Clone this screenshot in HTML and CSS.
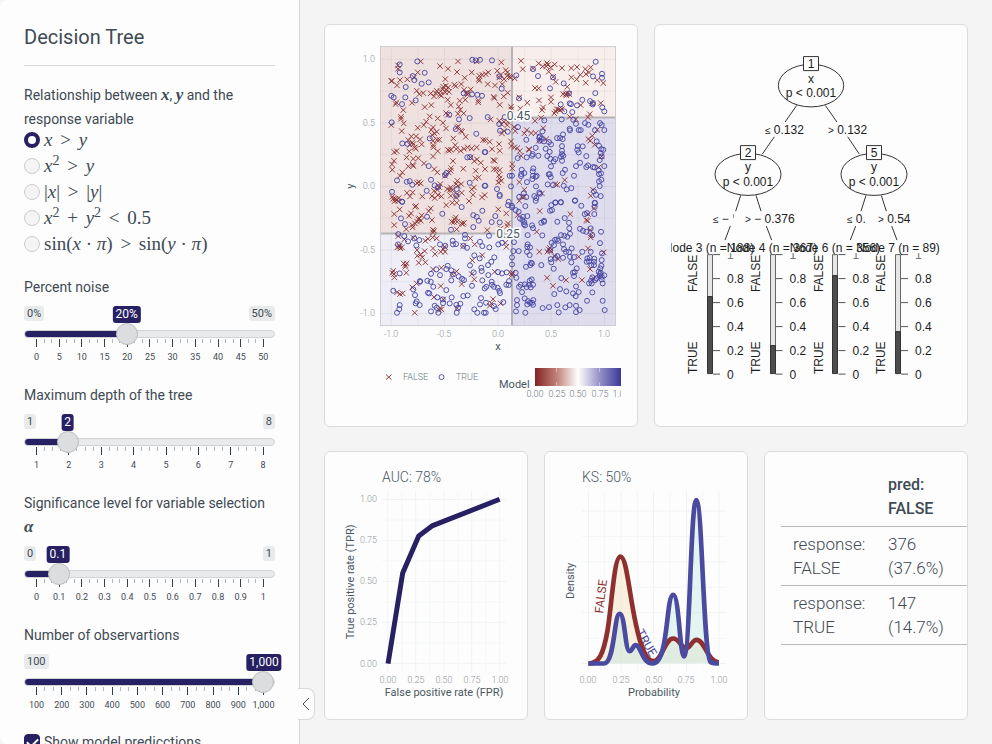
FILE: index.html
```html
<!DOCTYPE html>
<html lang="en">
<head>
<meta charset="utf-8">
<title>Decision Tree</title>
<link rel="stylesheet" href="styles.css">
</head>
<body>
<div class="layout">
  <aside class="sidebar">
    <form class="controls">
      <h1 class="title">Decision Tree</h1>
      <fieldset class="choices">
        <legend class="label">Relationship between <b class="math">x</b>, <b class="math">y</b> and the response variable</legend>
        <label class="choice"><input type="radio" name="rel" checked><span class="formula"><i>x</i> <span class="op">&gt;</span> <i>y</i></span></label>
        <label class="choice"><input type="radio" name="rel"><span class="formula"><i>x</i><sup>2</sup> <span class="op">&gt;</span> <i>y</i></span></label>
        <label class="choice"><input type="radio" name="rel"><span class="formula">|<i>x</i>| <span class="op">&gt;</span> |<i>y</i>|</span></label>
        <label class="choice"><input type="radio" name="rel"><span class="formula"><i>x</i><sup>2</sup> <span class="op">+</span> <i>y</i><sup>2</sup> <span class="op">&lt;</span> 0.5</span></label>
        <label class="choice"><input type="radio" name="rel"><span class="formula">sin(<i>x</i> · <i>π</i>) <span class="op">&gt;</span> sin(<i>y</i> · <i>π</i>)</span></label>
      </fieldset>
      <div class="field">
        <label class="label" for="noise">Percent noise</label>
        <div class="slider" style="--p:0.4">
          <div class="badges"><span class="limit">0%</span><output class="current" for="noise">20%</output><span class="limit">50%</span></div>
          <input id="noise" type="range" min="0" max="50" value="20">
          <div class="ticks" data-sub="3" data-labels="0 5 10 15 20 25 30 35 40 45 50"></div>
        </div>
      </div>
      <div class="field">
        <label class="label" for="depth">Maximum depth of the tree</label>
        <div class="slider" style="--p:0.143">
          <div class="badges"><span class="limit">1</span><output class="current" for="depth">2</output><span class="limit">8</span></div>
          <input id="depth" type="range" min="1" max="8" value="2">
          <div class="ticks" data-sub="4" data-labels="1 2 3 4 5 6 7 8"></div>
        </div>
      </div>
      <div class="field">
        <label class="label" for="alpha">Significance level for variable selection <b class="math">α</b></label>
        <div class="slider" style="--p:0.1">
          <div class="badges"><span class="limit">0</span><output class="current" for="alpha">0.1</output><span class="limit">1</span></div>
          <input id="alpha" type="range" min="0" max="1" step="0.01" value="0.1">
          <div class="ticks" data-sub="3" data-labels="0 0.1 0.2 0.3 0.4 0.5 0.6 0.7 0.8 0.9 1"></div>
        </div>
      </div>
      <div class="field">
        <label class="label" for="obs">Number of observartions</label>
        <div class="slider" style="--p:1">
          <div class="badges"><span class="limit">100</span><output class="current" for="obs">1,000</output></div>
          <input id="obs" type="range" min="100" max="1000" value="1000">
          <div class="ticks" data-sub="3" data-labels="100 200 300 400 500 600 700 800 900 1,000"></div>
        </div>
      </div>
      <label class="check"><input type="checkbox" checked>Show model predicctions</label>
    </form>
    <button class="collapse" type="button" aria-label="Toggle sidebar"><svg width="8" height="14" viewBox="0 0 8 14"><path d="M7 1 1 7l6 6"/></svg></button>
  </aside>
  <main class="main">
    <div class="row row-top">
      <section class="card">
        <svg class="plot" viewBox="325 25 312 401">
          <defs>
            <linearGradient id="ramp"><stop offset="0" stop-color="#832424"/><stop offset=".25" stop-color="#be8177"/><stop offset=".5" stop-color="#fff"/><stop offset=".75" stop-color="#9791c8"/><stop offset="1" stop-color="#3a3a98"/></linearGradient>
            <clipPath id="legendClip"><path d="M325 365h296v40h-296z"/></clipPath>
          </defs>
          <path fill="#efe1df" d="M381 46h131v188H381z"/><path fill="#f8eeec" d="M512 46h104v72H512z"/>
          <path fill="#efeef7" d="M381 234h131v92H381z"/><path fill="#dfdcee" d="M512 118h104v208H512z"/>
          <path class="grid-over" d="M391.4 47v279M444.5 47v279M498 47v279M551 47v279M604.5 47v279M381 59.3h235M381 123h235M381 186.500h235M381 250h235M381 313.500h235"/>
          <path class="grid-over faint" d="M418 47v279M471 47v279M524.500 47v279M578 47v279M381 91h235M381 154.500h235M381 218h235M381 281.500h235"/>
          <path class="region-edge" d="M512 46v280M381 233.500h131M512 117.500h104"/>
          <rect class="frame" x="380.500" y="46.500" width="235" height="279"/>
          <path id="no" class="no"/><path id="yes" class="yes"/>
          <g class="region-label"><text x="518.500" y="120">0.45</text><text x="508" y="238">0.25</text></g>
          <g class="tick end"><text x="375" y="62">1.0</text><text x="375" y="126">0.5</text><text x="375" y="189">0.0</text><text x="375" y="253">-0.5</text><text x="375" y="316">-1.0</text></g>
          <g class="tick mid"><text x="391" y="337">-1.0</text><text x="444" y="337">-0.5</text><text x="498" y="337">0.0</text><text x="551" y="337">0.5</text><text x="604" y="337">1.0</text></g>
          <g class="axis mid"><text x="498" y="350">x</text><text transform="translate(354 186) rotate(-90)">y</text></g>
          <path class="no" d="M386 374.500l5.500 5m0-5l-5.500 5"/><circle class="yes" cx="441.500" cy="377" r="2.500"/>
          <g class="legend"><text x="403" y="380">FALSE</text><text x="456" y="380">TRUE</text></g>
          <text class="axis" x="499" y="388">Model</text>
          <g clip-path="url(#legendClip)">
            <path fill="url(#ramp)" d="M535 368h86v18h-86z"/>
            <path stroke="#fff" stroke-opacity=".4" d="M556.500 368v4m0 10v4M599.500 368v4m0 10v4"/>
            <g class="legend mid"><text x="535" y="397">0.00</text><text x="557" y="397">0.25</text><text x="578" y="397">0.50</text><text x="600" y="397">0.75</text><text x="621" y="397">1.00</text></g>
          </g>
        </svg>
      </section>
      <section class="card">
        <svg class="plot tree" viewBox="655 25 312 401">
          <defs>
            <clipPath id="treeClip"><path d="M671 40h280v360H671z"/></clipPath>
            <g id="scale"><path class="dark" d="M0 254.500h-7M0 278.500h-7M0 302.500h-7M0 326.500h-7M0 350.500h-7M0 374h-7"/>
              <text x="7" y="282.500">0.8</text><text x="7" y="306.500">0.6</text><text x="7" y="330.500">0.4</text><text x="7" y="354.500">0.2</text><text x="7" y="378.500">0</text><text class="top-value" x="7" y="259">1</text>
              <text transform="translate(-23 292) rotate(-90)">FALSE</text><text transform="translate(-23 374) rotate(-90)">TRUE</text></g>
          </defs>
          <g class="edges"><path d="M796.700 105.300 785 122M774.300 136.700 762.300 154M825.300 105.300 837 122M847.700 136.700 859.300 154M740.700 195.300 735.700 211M730.300 226 725 240M756 195.300 761 211M766.300 226 771.700 240M866 195.300 861 211M855.700 226 850.300 240M881.300 195.300 886.300 211M891.700 226 897 240"/>
            <ellipse cx="811" cy="85.500" rx="32.700" ry="21.300"/><ellipse cx="748" cy="174.300" rx="33" ry="21"/><ellipse cx="874" cy="174.300" rx="33" ry="21"/>
            <path fill="#fff" d="M803.500 56.500h15v14h-15zM740.500 145.500h15v14h-15zM866.500 145.500h15v14h-15z"/></g>
          <g class="mid"><text x="811" y="68">1</text><text x="811" y="83">x</text><text x="811" y="97">p &lt; 0.001</text>
            <text x="748" y="157">2</text><text x="748" y="171">y</text><text x="748" y="186">p &lt; 0.001</text>
            <text x="874" y="157">5</text><text x="874" y="171">y</text><text x="874" y="186">p &lt; 0.001</text></g>
          <text x="765" y="134"><tspan class="sign">≤</tspan> 0.132</text><text x="828" y="134"><tspan class="sign">&gt;</tspan> 0.132</text>
          <text x="713" y="223"><tspan class="sign">≤</tspan> −</text><path stroke="#999" d="M733.500 214v4"/><text x="745" y="223"><tspan class="sign">&gt;</tspan> − 0.376</text>
          <text x="847" y="223"><tspan class="sign">≤</tspan> 0.</text><text x="878" y="223"><tspan class="sign">&gt;</tspan> 0.54</text>
          <use href="#scale" x="720"/><use href="#scale" x="782.500"/><use href="#scale" x="845.500"/><use href="#scale" x="908"/>
          <path fill="#fdfdfd" d="M671 242h270v11H671z"/>
          <g clip-path="url(#treeClip)" class="mid"><text x="709" y="252">Node 3 (n = 188)</text><text x="772" y="252">Node 4 (n = 367)</text><text x="835" y="252">Node 6 (n = 356)</text><text x="898" y="252">Node 7 (n = 89)</text></g>
          <path class="bar-light" d="M707.500 254.500h5v42h-5zM770.500 254.500h5v91h-5zM832.500 254.500h5v21h-5zM895.500 254.500h5v77h-5z"/>
          <path class="bar-dark" d="M707.500 296.500h5v77h-5zM770.500 345.500h5v28h-5zM832.500 275.500h5v98h-5zM895.500 331.500h5v42h-5z"/>
        </svg>
      </section>
    </div>
    <div class="row row-bottom">
      <section class="card">
        <svg class="plot" viewBox="325 452 202 267">
          <text class="heading" x="382" y="482">AUC: 78%</text>
          <path class="grid" d="M387.700 491v181M415.700 491v181M444 491v181M471.700 491v181M499.700 491v181M382 499.500h124M382 540.500h124M382 581.500h124M382 622.500h124M382 663.500h124"/>
          <path class="grid faint" d="M401.700 491v181M430 491v181M458 491v181M486 491v181M382 520h124M382 561h124M382 602h124M382 643h124"/>
          <path class="roc" d="M388 663.700 402.700 573 418.700 536 432 526 499.700 499.300"/>
          <g class="tick end"><text x="377" y="502">1.00</text><text x="377" y="543">0.75</text><text x="377" y="584">0.50</text><text x="377" y="625">0.25</text><text x="377" y="667">0.00</text></g>
          <g class="tick mid"><text x="388" y="683">0.00</text><text x="416" y="683">0.25</text><text x="444" y="683">0.50</text><text x="472" y="683">0.75</text><text x="500" y="683">1.00</text></g>
          <g class="axis mid"><text x="444" y="696">False positive rate (FPR)</text><text transform="translate(354 582) rotate(-90)">True positive rate (TPR)</text></g>
        </svg>
      </section>
      <section class="card">
        <svg class="plot" viewBox="545 452 202 267">
          <defs>
            <path id="densityNo" d="M133 641C165 641 177 615 190 545 203 470 210 320 229 320 248 320 255 430 275 520 290 590 305 634 329 634 355 632 362 566 388 566 405 566 412 595 428 595 440 592 445 570 458 570 482 570 490 636 525 638"/>
            <path id="densityYes" d="M133 641H180C212 641 210 492 227 492 243 492 243 604 257 604 265 604 267 586 275 586 290 586 295 641 325 641 375 645 365 435 388 435 405 435 408 620 420 620 438 620 440 150 457 150 475 150 478 620 500 637 508 641 515 641 525 641"/>
          </defs>
          <text class="heading" x="582" y="482">KS: 50%</text>
          <path class="grid" d="M588.500 491v181M621 491v181M653.500 491v181M686.500 491v181M719 491v181M582 511h144M582 562h144M582 612.700h144M582 663.700h144"/>
          <path class="grid faint" d="M604.500 491v181M637.500 491v181M670 491v181M703 491v181M582 536.500h144M582 587.500h144M582 638.500h144"/>
          <g class="curve-label mid"><text transform="translate(605 597) rotate(-83)">FALSE</text><text transform="translate(643 645) rotate(60)">TRUE</text></g>
          <g transform="translate(544 450) scale(.33333)">
            <g class="areas"><use href="#densityNo" fill="#f5deb8"/><use href="#densityYes" fill="#bfe6e0"/></g>
            <g class="curves"><use href="#densityNo" stroke="#8f3030"/><use href="#densityYes" stroke="#4a4aa0"/></g>
          </g>
          <g class="tick mid"><text x="588" y="683">0.00</text><text x="621" y="683">0.25</text><text x="654" y="683">0.50</text><text x="686" y="683">0.75</text><text x="719" y="683">1.00</text></g>
          <g class="axis mid"><text x="654" y="696">Probability</text><text transform="translate(574 581) rotate(-90)">Density</text></g>
        </svg>
      </section>
      <section class="card card-table">
        <table class="confusion">
          <thead><tr><td></td><th scope="col">pred: FALSE</th></tr></thead>
          <tbody>
            <tr><th scope="row">response: FALSE</th><td>376 (37.6%)</td></tr>
            <tr><th scope="row">response: TRUE</th><td>147 (14.7%)</td></tr>
          </tbody>
        </table>
      </section>
    </div>
  </main>
</div>
<script src="script.js"></script>
</body>
</html>
```
FILE: styles.css
```css
* { box-sizing: border-box; }
body { margin: 0; background: #f4f4f4; color: #3f4a54; font: 14px/24px Roboto, "Liberation Sans", sans-serif; }
.layout { display: flex; height: 100vh; }
.sidebar { position: relative; flex: 0 0 300px; background: #fdfdfd; border-right: 1px solid #d5d9db; border-radius: 8px 0 0 8px; }
.controls { height: 100%; overflow: hidden; padding: 24px; }
.title { margin: 0 0 17px; padding-bottom: 15px; border-bottom: 1px solid #d5d9db; font-size: 20px; line-height: 26px; font-weight: 400; }
.label { display: block; padding: 0; }
.math { font: italic bold 17px/20px "Liberation Serif", serif; }
.choices { margin: 0 0 18px; padding: 0; border: 0; }
.choice { display: flex; align-items: center; gap: 4px; height: 26px; }
.choices .choice:nth-of-type(1) { margin-top: -4px; }
.formula { font: 19px/24px "Liberation Serif", serif; white-space: nowrap; }
.op { padding: 0 3px; }
.formula sup { font-size: 14px; line-height: 0; }
input[type="radio"], input[type="checkbox"] { appearance: none; flex: none; width: 16px; height: 16px; margin: 0; border: 1px solid #c9cccf; border-radius: 50%; background: #f4f4f4; }
input[type="radio"]:checked { border: 4px solid #272163; background: #fdfdfd; }
input[type="checkbox"] { border-radius: 4px; display: grid; justify-items: center; padding-top: 3px; }
input[type="checkbox"]:checked { background: #272163; border-color: #272163; }
input[type="checkbox"]:checked::after { content: ""; width: 9px; height: 5px; border: solid #fff; border-width: 0 0 2px 2px; transform: rotate(-45deg); }
.check { display: flex; align-items: center; gap: 4px; height: 24px; }
.field { margin-bottom: 12px; }
.field:last-of-type { margin-bottom: 11px; }
.slider { height: 72px; padding-top: 7px; }
.badges { position: relative; display: flex; justify-content: space-between; height: 17px; font-size: 11px; line-height: 15px; }
.limit { height: 15px; padding: 0 3px; border-radius: 3px; background: #e9eaeb; }
.current { position: absolute; top: 0; left: calc(11px + (100% - 22px) * var(--p)); transform: translateX(-50%); padding: 0 3px; border-radius: 3px; background: #272163; color: #fff; font-size: 12px; line-height: 17px; }
.slider input { appearance: none; position: relative; display: block; width: 100%; height: 22px; margin: 0; background: none; }
.slider input::-webkit-slider-runnable-track { height: 8px; border: 1px solid #d0d3d5; border-radius: 4px; background: linear-gradient(#272163, #272163) 0 0 / calc(11px + (100% - 22px) * var(--p)) 100% no-repeat border-box, #e9eaeb; }
.slider input::-webkit-slider-thumb { appearance: none; width: 22px; height: 22px; margin-top: -8px; border: 1px solid #babdc0; border-radius: 50%; background: #dcdddf; }
.ticks { display: flex; justify-content: space-between; height: 26px; margin-top: -6px; padding: 0 11px 0 12px; font-size: 9px; line-height: 12px; }
.tick-mark { display: flex; flex-direction: column; align-items: center; width: 1px; white-space: nowrap; }
.tick-mark::before { content: ""; flex: none; width: 1px; height: 4px; background: #b0b5b8; }
.tick-mark.major::before { height: 8px; margin-bottom: 4px; background: #34434e; }
.collapse { position: absolute; right: -16px; bottom: 24px; display: grid; place-items: center; width: 17px; height: 32px; padding: 0; border: 1px solid #d5d9db; border-left: 0; border-radius: 0 8px 8px 0; background: #fdfdfd; }
.collapse path { fill: none; stroke: #3f4a54; }
.main { flex: 1; min-width: 0; display: grid; grid-template-rows: 3fr 2fr; gap: 24px; padding: 24px; }
.row { display: grid; gap: 16px; min-height: 0; }
.row-top { grid-template-columns: repeat(2, minmax(0, 1fr)); }
.row-bottom { grid-template-columns: repeat(3, minmax(0, 1fr)); }
.card { min-height: 0; overflow: hidden; border: 1px solid #d9dcde; border-radius: 6px; background: #fdfdfd; }
.plot { display: block; width: 100%; height: 100%; }
.plot text { fill: #4a5863; }
.plot .mid text { text-anchor: middle; }
.plot .end text { text-anchor: end; }
.plot .tick text { font-size: 9px; font-weight: 300; fill: #8f969b; }
.plot .legend text { font-size: 9px; font-weight: 300; fill: #6d777e; }
.plot .axis { font-size: 11px; }
.plot .heading { font-size: 14px; font-weight: 300; }
.region-label text { font-size: 12px; text-anchor: middle; stroke: #fff; stroke-width: 3px; paint-order: stroke; }
.grid-over { fill: none; stroke: #50606a; stroke-opacity: .08; }
.grid-over.faint { stroke-opacity: .06; }
.region-edge { fill: none; stroke: #b5b3b5; stroke-width: 2; }
.frame { fill: none; stroke: #cfcdd0; }
.no { fill: none; stroke: #8a2f2f; stroke-opacity: .9; }
.yes { fill: none; stroke: #4444a4; stroke-opacity: .9; }
.tree { font: 12px "Liberation Sans", sans-serif; }
.plot.tree text { fill: #1c1c1c; }
.plot.tree .top-value { fill: #777; }
.sign { font-size: 10px; }
.edges { fill: none; stroke: #333; }
.dark { stroke: #555; }
.bar-light { fill: #e6e6e6; stroke: #666; }
.bar-dark { fill: #4d4d4d; stroke: #333; }
.grid { fill: none; stroke: #f1f3f3; stroke-width: 1; }
.grid.faint { stroke: #f5f7f7; }
.roc { fill: none; stroke: #272163; stroke-width: 5; stroke-linejoin: round; }
.areas { fill-opacity: .42; }
.curves { fill: none; stroke-width: 14; stroke-linejoin: round; }
.curve-label { font-size: 12px; }
.plot .curve-label text { fill: #8f3030; }
.plot .curve-label text:last-child { fill: #4a4aa0; }
.card-table { padding: 16px 0 0 16px; }
.confusion { width: 100%; table-layout: fixed; border-collapse: collapse; font-size: 17px; line-height: 24px; font-weight: 300; }
.confusion th, .confusion td { padding: 5px 12px; border-bottom: 1px solid #b8bcbf; text-align: left; }
.confusion td:first-child { width: 95px; }
.confusion thead th { font-size: 16px; font-weight: 500; }
.confusion tbody th { font-weight: 300; }
```
FILE: script.js
```js
// Slider scales: every label gets a long mark, with short marks in between.
document.querySelectorAll(".ticks").forEach(function (box) {
  var labels = box.dataset.labels.split(" ");
  var sub = Number(box.dataset.sub);
  for (var i = 0; i <= (labels.length - 1) * sub; i++) {
    var mark = document.createElement("span");
    mark.className = "tick-mark";
    if (i % sub === 0) {
      mark.classList.add("major");
      var text = document.createElement("span");
      text.textContent = labels[i / sub];
      mark.append(text);
    }
    box.append(mark);
  }
});

// Observations, stored per tile in thirds of a plot unit from the tile's origin.
var tiles = [
  { x: 324, y: 24,
    yes: "227,121 227,145 280,112 302,146 266,156 271,168 293,179 314,175 245,189 202,215 209,220 244,220 275,229 234,240 203,295 376,272 405,286 437,282 419,208 444,211 460,212 474,215 445,107 455,109 468,107 395,315 457,329 317,343 235,358 250,359 430,400 438,399 314,426 219,469 248,473 257,471 265,482 321,467 332,484 342,489 367,447 363,453 308,500 204,503 234,533 398,495 397,515 437,476 482,384 482,485",
    no: "222,124 222,134 290,112 281,145 348,126 372,134 402,112 399,144 443,145 422,161 202,171 204,170 228,168 219,184 250,166 270,160 364,165 466,155 475,152 464,165 466,170 458,112 278,200 298,207 320,208 338,200 356,195 365,185 373,190 391,182 395,186 412,180 420,197 440,196 286,210 330,217 348,212 364,205 352,215 335,207 358,188 367,197 375,203 350,202 430,212 433,207 426,206 217,235 215,240 264,236 302,249 322,243 380,243 371,227 407,230 404,247 424,227 463,229 463,235 238,258 231,278 231,284 239,298 202,303 233,321 317,277 341,283 307,293 299,303 281,311 357,296 366,313 372,272 366,267 402,269 419,268 409,257 327,310 322,317 338,323 331,328 325,333 399,310 411,320 403,307 414,323 388,343 425,338 262,337 276,337 288,346 253,348 268,360 258,362 265,355 293,361 272,370 275,374 327,350 339,347 346,347 328,363 328,370 341,381 327,397 218,381 211,384 256,382 248,400 283,402 268,404 210,410 204,421 205,437 235,445 228,455 253,427 268,426 266,422 300,418 331,435 340,445 372,377 381,377 375,380 394,363 397,375 410,380 420,374 431,370 443,373 458,370 477,348 451,411 459,406 470,416 387,411 381,432 418,434 374,445 363,455 380,440 455,440 454,463 464,460 440,400 279,477 290,478 284,474 349,480 345,489 400,470 396,480 402,485 380,490 370,495 377,498 385,498 412,480 249,506 258,517 266,505 295,517 205,518 214,524 224,522 218,528 208,524 330,500 340,497 352,517 324,516 443,496 447,512 474,520 413,506 380,515 342,513 400,510 396,520 332,522 450,490" },
  { x: 484, y: 24,
    yes: "24,109 335,113 147,135 162,156 97,154 46,157 53,194 207,160 354,149 354,161 327,157 239,178 198,193 334,207 255,208 105,223 230,241 241,262 257,238 261,240 279,244 265,264 295,227 318,231 327,237 326,241 355,250 361,262 11,279 62,279 46,300 48,320 71,323 102,309 181,289 233,286 268,287 276,299 303,297 313,302 257,314 258,319 284,318 290,318 348,297 353,303 361,318 333,318 175,322 127,347 4,384 155,371 168,337 173,344 167,350 180,352 166,340 195,354 201,361 185,374 197,383 219,342 228,342 237,331 236,345 101,402 128,400 144,395 146,390 163,395 190,396 199,404 214,405 209,412 201,427 234,366 234,380 234,390 238,395 231,398 234,410 281,366 280,377 296,367 284,385 307,396 288,416 276,426 307,429 312,424 327,429 332,430 344,439 361,426 338,352 345,365 352,375 358,377 350,387 353,397 347,408 243,437 236,447 270,455 197,450 200,459 194,451 148,433 146,442 158,455 155,458 147,455 113,437 112,450 111,456 121,447 84,455 77,455 81,487 39,495 47,512 47,516 4,485 74,533 129,474 145,465 156,487 191,481 207,483 239,485 248,496 262,492 351,448 345,450 352,467 345,472 347,486 330,502 336,512 350,516 333,537 273,529 119,508 106,518 127,519 151,516 157,522 166,505 168,509 214,535 230,534",
    no: "52,115 111,110 116,135 164,118 176,127 189,117 187,126 192,122 194,143 200,130 212,121 234,132 262,132 279,129 320,130 304,135 289,152 306,150 315,145 262,160 278,166 305,176 340,168 358,177 215,173 208,158 250,188 147,133 40,140 13,145 5,150 65,138 70,145 46,160 50,152 60,165 70,155 80,160 92,163 76,158 55,180 33,184 11,180 153,192 164,193 29,218 31,222 59,217 71,206 106,220 47,242 81,248 82,256 130,236 165,229 201,220 201,233 177,250 174,258 237,210 245,210 256,210 247,214 250,208 109,253 218,255 228,258 211,268 234,255 224,256 215,262 290,243 324,238 350,237 317,270 312,280 257,278 275,285 171,281 153,290 20,286 46,290 60,293 71,293 52,300 70,303 60,320 94,321 121,328 90,309 128,318 155,327 178,312 165,350 187,345 142,327 340,317 325,335 313,345 319,350 332,362 353,397 344,430 4,348 17,353 45,360 24,375 47,380 81,352 82,366 91,370 100,372 107,381 111,395 134,375 136,377 54,328 28,408 32,410 3,435 29,435 37,436 47,438 85,420 85,433 45,453 47,463 43,475 52,470 2,513 106,474 121,497 121,518 113,518 174,508 214,480 220,482 242,468 327,497 320,515" },
  { x: 324, y: 200,
    yes: "235,5 231,55 243,72 309,50 355,41 413,21 381,89 448,45 458,50 464,62 448,81 475,32 223,102 241,108 252,124 271,115 286,120 277,136 222,133 348,133 364,137 386,122 387,133 396,132 423,104 423,115 429,143 418,137 468,125 475,138 451,166 467,175 438,196 472,203 473,213 449,217 371,197 367,207 382,211 337,208 321,221 348,225 382,241 404,229 414,236 420,240 387,223 444,257 475,241 227,220 208,272 288,245 288,243 310,242 320,245 328,260 312,278 316,280 268,268 273,285 278,304 275,310 287,315 227,315 226,327 219,338 321,334 343,338 332,317 338,323 340,292 357,309 356,298 367,270 383,292 377,310 397,314 409,311 402,323 398,338 418,288 431,286 471,294 468,313 451,328 460,338 480,338 482,265",
    no: "212,3 223,3 273,20 276,18 320,25 314,33 227,28 211,42 261,40 255,47 293,46 286,55 290,62 280,65 283,58 324,60 265,75 266,82 247,87 273,70 211,75 367,15 385,8 398,8 435,3 395,52 383,65 390,66 400,65 392,58 413,70 416,72 420,68 398,88 327,89 327,97 330,92 223,108 241,118 268,113 304,122 312,116 326,112 338,115 227,140 220,142 234,142 226,136 229,145 279,150 302,153 290,163 280,167 295,172 284,188 304,187 327,145 350,155 333,162 358,147 363,155 362,140 439,115 452,133 418,138 475,165 445,181 239,190 248,190 244,200 244,195 247,218 208,212 210,222 211,232 205,218 327,208 352,203 385,222 398,214 443,222 451,238 413,252 278,250 265,262 350,258 219,277 228,282 236,280 330,291 358,298 346,330 352,328 349,324 272,338 400,324" },
  { x: 484, y: 200,
    yes: "72,15 84,17 84,22 34,48 23,66 47,67 15,107 43,133 54,128 16,142 31,172 22,185 12,195 13,225 42,216 54,220 68,217 95,218 97,233 75,243 67,254 74,255 84,193 84,172 88,153 104,153 90,126 85,107 23,245 24,254 7,260 41,263 46,272 48,279 30,260 5,338 35,327 30,318 58,306 6,308 99,300 99,315 96,334 124,338 122,295 132,303 138,308 148,300 147,314 130,313 144,308 110,254 105,260 122,253 114,276 128,261 136,254 147,254 140,262 137,242 143,238 126,200 139,195 144,190 141,188 137,165 129,155 130,140 138,142 131,133 131,105 147,84 144,76 121,66 123,76 115,60 117,50 108,55 130,48 120,72 95,30 104,35 124,18 155,2 172,195 176,324 195,321 224,337 220,315 211,282 228,267 247,274 267,280 275,288 284,276 276,259 244,322 257,315 276,317 276,336 287,330 309,302 356,302 362,330 325,277 232,234 209,206 202,187 200,177 214,173 220,168 199,150 210,135 203,128 213,119 219,118 223,122 231,105 241,107 250,110 258,101 175,106 172,68 180,62 180,65 220,65 242,54 255,68 256,85 198,32 204,30 202,15 214,8 231,7 273,2 292,17 332,8 332,20 331,42 309,39 302,42 288,86 297,92 307,95 320,85 351,95 348,129 325,105 237,133 240,147 246,155 255,156 263,145 258,170 270,171 262,187 237,173 272,216 278,205 267,218 270,228 295,155 320,155 310,175 315,184 317,173 331,176 330,185 308,185 322,195 330,195 353,180 354,160 352,197 349,205 344,215 350,218 353,230 361,226 347,228 353,238 356,250 325,232 333,240 321,242 315,250 323,250 337,235 348,222",
    no: "43,28 67,40 101,45 72,70 50,85 10,90 70,78 106,2 167,33 158,95 166,155 197,143 200,152 190,155 194,148 212,168 223,177 259,42 311,62 307,60 330,25 319,90 320,105 320,112 312,42 312,145 284,170 359,157 318,207 329,235 189,233 246,240 294,240 207,257 64,128 67,140 32,215 83,220 84,225 86,218 27,297 22,310 17,317 50,310" }
];

function draw(kind, glyph) {
  var d = tiles.map(function (tile) {
    return tile[kind].split(" ").map(function (pair) {
      var p = pair.split(",");
      var x = tile.x + p[0] / 3;
      var y = tile.y + p[1] / 3;
      return glyph(x.toFixed(1), y.toFixed(1));
    }).join("");
  }).join("");
  document.getElementById(kind).setAttribute("d", d);
}
draw("no", function (x, y) { return "M" + x + " " + y + "m-2.7-2.7l5.4 5.4m0-5.4l-5.4 5.4"; });
draw("yes", function (x, y) { return "M" + x + " " + y + "m-2.5 0a2.5 2.5 0 1 0 5 0a2.5 2.5 0 1 0-5 0"; });
```
